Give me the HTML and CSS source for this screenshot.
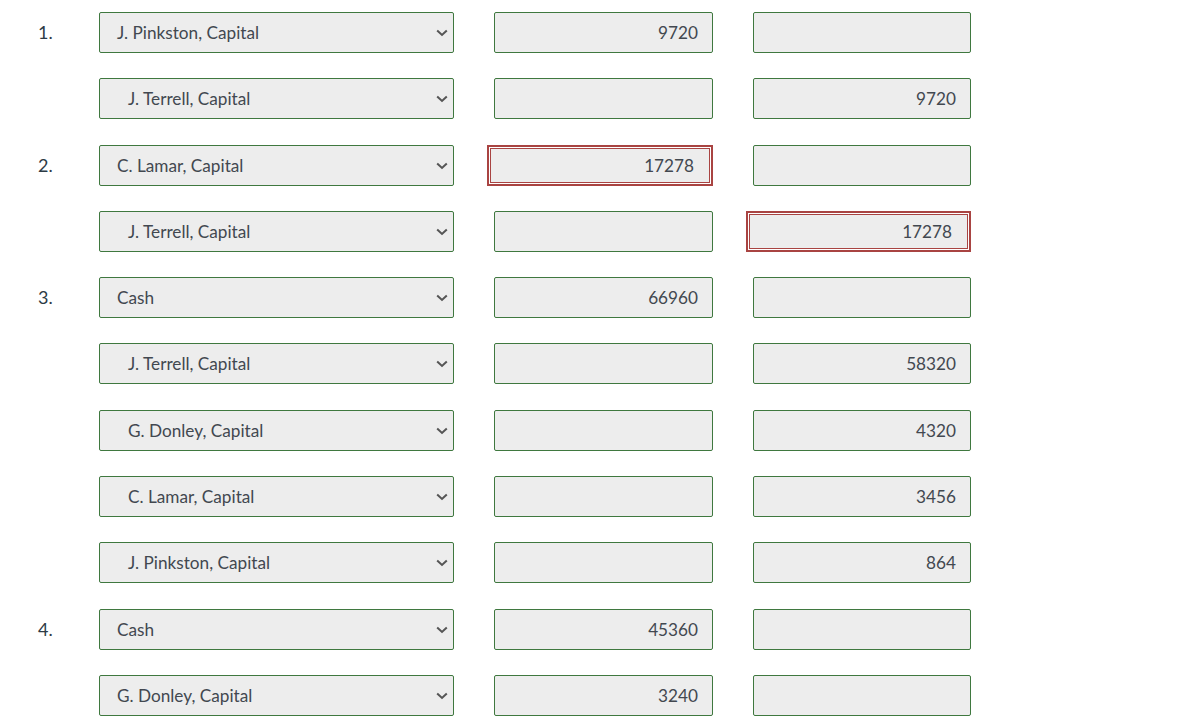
FILE: index.html
```html
<!DOCTYPE html>
<html>
<head>
<meta charset="utf-8">
<link rel="stylesheet" href="styles.css">
</head>
<body>
<div class="journal">
  <div class="row">
    <div class="num">1.</div>
    <div class="acct"><span class="acct-text">J. Pinkston, Capital</span><svg class="chev" width="12" height="8" viewBox="0 0 12 8"><path d="M1.2 1.5 L6 6 L10.8 1.5" fill="none" stroke="#555" stroke-width="2"/></svg></div>
    <div class="cell debit"><div class="amt">9720</div></div>
    <div class="cell credit"><div class="amt"></div></div>
  </div>
  <div class="row">
    <div class="num"></div>
    <div class="acct"><span class="acct-text indent">J. Terrell, Capital</span><svg class="chev" width="12" height="8" viewBox="0 0 12 8"><path d="M1.2 1.5 L6 6 L10.8 1.5" fill="none" stroke="#555" stroke-width="2"/></svg></div>
    <div class="cell debit"><div class="amt"></div></div>
    <div class="cell credit"><div class="amt">9720</div></div>
  </div>
  <div class="row">
    <div class="num">2.</div>
    <div class="acct"><span class="acct-text">C. Lamar, Capital</span><svg class="chev" width="12" height="8" viewBox="0 0 12 8"><path d="M1.2 1.5 L6 6 L10.8 1.5" fill="none" stroke="#555" stroke-width="2"/></svg></div>
    <div class="cell debit"><div class="amt error">17278</div></div>
    <div class="cell credit"><div class="amt"></div></div>
  </div>
  <div class="row">
    <div class="num"></div>
    <div class="acct"><span class="acct-text indent">J. Terrell, Capital</span><svg class="chev" width="12" height="8" viewBox="0 0 12 8"><path d="M1.2 1.5 L6 6 L10.8 1.5" fill="none" stroke="#555" stroke-width="2"/></svg></div>
    <div class="cell debit"><div class="amt"></div></div>
    <div class="cell credit"><div class="amt error">17278</div></div>
  </div>
  <div class="row">
    <div class="num">3.</div>
    <div class="acct"><span class="acct-text">Cash</span><svg class="chev" width="12" height="8" viewBox="0 0 12 8"><path d="M1.2 1.5 L6 6 L10.8 1.5" fill="none" stroke="#555" stroke-width="2"/></svg></div>
    <div class="cell debit"><div class="amt">66960</div></div>
    <div class="cell credit"><div class="amt"></div></div>
  </div>
  <div class="row">
    <div class="num"></div>
    <div class="acct"><span class="acct-text indent">J. Terrell, Capital</span><svg class="chev" width="12" height="8" viewBox="0 0 12 8"><path d="M1.2 1.5 L6 6 L10.8 1.5" fill="none" stroke="#555" stroke-width="2"/></svg></div>
    <div class="cell debit"><div class="amt"></div></div>
    <div class="cell credit"><div class="amt">58320</div></div>
  </div>
  <div class="row">
    <div class="num"></div>
    <div class="acct"><span class="acct-text indent">G. Donley, Capital</span><svg class="chev" width="12" height="8" viewBox="0 0 12 8"><path d="M1.2 1.5 L6 6 L10.8 1.5" fill="none" stroke="#555" stroke-width="2"/></svg></div>
    <div class="cell debit"><div class="amt"></div></div>
    <div class="cell credit"><div class="amt">4320</div></div>
  </div>
  <div class="row">
    <div class="num"></div>
    <div class="acct"><span class="acct-text indent">C. Lamar, Capital</span><svg class="chev" width="12" height="8" viewBox="0 0 12 8"><path d="M1.2 1.5 L6 6 L10.8 1.5" fill="none" stroke="#555" stroke-width="2"/></svg></div>
    <div class="cell debit"><div class="amt"></div></div>
    <div class="cell credit"><div class="amt">3456</div></div>
  </div>
  <div class="row">
    <div class="num"></div>
    <div class="acct"><span class="acct-text indent">J. Pinkston, Capital</span><svg class="chev" width="12" height="8" viewBox="0 0 12 8"><path d="M1.2 1.5 L6 6 L10.8 1.5" fill="none" stroke="#555" stroke-width="2"/></svg></div>
    <div class="cell debit"><div class="amt"></div></div>
    <div class="cell credit"><div class="amt">864</div></div>
  </div>
  <div class="row">
    <div class="num">4.</div>
    <div class="acct"><span class="acct-text">Cash</span><svg class="chev" width="12" height="8" viewBox="0 0 12 8"><path d="M1.2 1.5 L6 6 L10.8 1.5" fill="none" stroke="#555" stroke-width="2"/></svg></div>
    <div class="cell debit"><div class="amt">45360</div></div>
    <div class="cell credit"><div class="amt"></div></div>
  </div>
  <div class="row">
    <div class="num"></div>
    <div class="acct"><span class="acct-text">G. Donley, Capital</span><svg class="chev" width="12" height="8" viewBox="0 0 12 8"><path d="M1.2 1.5 L6 6 L10.8 1.5" fill="none" stroke="#555" stroke-width="2"/></svg></div>
    <div class="cell debit"><div class="amt">3240</div></div>
    <div class="cell credit"><div class="amt"></div></div>
  </div>
</div>
</body>
</html>
```
FILE: styles.css
```css
html, body {
  margin: 0;
  padding: 0;
  background: #fff;
}
body {
  font-family: Lato, "Open Sans", sans-serif;
  color: #444;
}
.journal {
  padding-top: 12px;
  display: flex;
  flex-direction: column;
}
.row {
  display: flex;
  height: 66.3px;
  align-items: flex-start;
}
.num {
  width: 99px;
  box-sizing: border-box;
  padding-left: 38px;
  font-size: 18px;
  line-height: 41px;
  color: #2d3b45;
}
.acct {
  width: 355px;
  height: 41px;
  box-sizing: border-box;
  border: 1px solid #3f783f;
  border-radius: 2px;
  background: #ededed;
  display: flex;
  align-items: center;
  padding-left: 17px;
  padding-right: 5px;
  font-size: 17.2px;
  color: #424850;
}
.acct-text {
  flex: 1;
}
.acct-text.indent {
  padding-left: 11px;
}
.chev {
  display: block;
  margin-top: 1px;
}
.cell {
  display: flex;
  justify-content: flex-end;
}
.debit {
  width: 226px;
  margin-left: 33px;
}
.credit {
  width: 225px;
  margin-left: 33px;
}
.amt {
  width: 219px;
  height: 41px;
  box-sizing: border-box;
  border: 1px solid #3f783f;
  border-radius: 2px;
  background: #ededed;
  font-size: 17.2px;
  line-height: 39px;
  text-align: right;
  padding-right: 14px;
  color: #424850;
}
.credit .amt {
  width: 218px;
}
.amt.error {
  width: 226px;
  border: 2px solid #a94442;
  border-radius: 0;
  box-shadow: inset 0 0 0 1px #fff, inset 0 0 0 2px #a94442;
  line-height: 37px;
  padding-right: 17px;
}
.credit .amt.error {
  width: 225px;
}
```
